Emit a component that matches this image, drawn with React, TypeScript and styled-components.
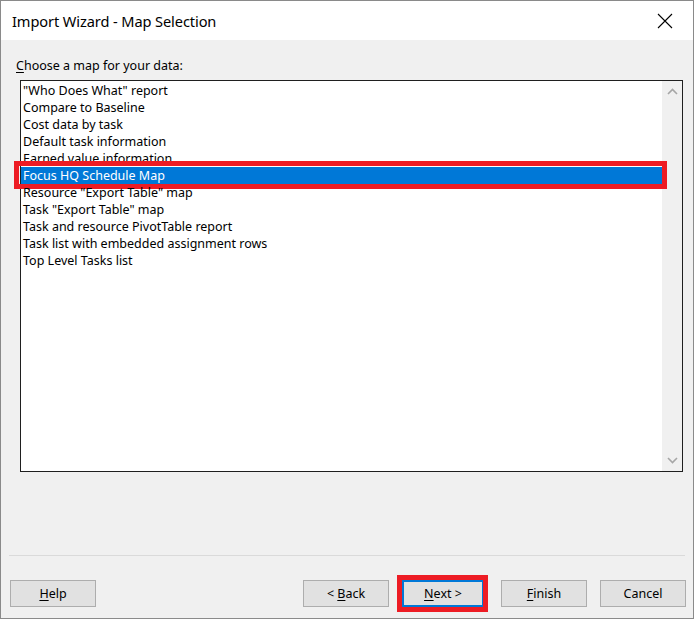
import { FC } from "react";
import styled, { createGlobalStyle } from "styled-components";

const maps = [
  '"Who Does What" report',
  "Compare to Baseline",
  "Cost data by task",
  "Default task information",
  "Earned value information",
  "Focus HQ Schedule Map",
  'Resource "Export Table" map',
  'Task "Export Table" map',
  "Task and resource PivotTable report",
  "Task list with embedded assignment rows",
  "Top Level Tasks list",
];

const selectedMap = "Focus HQ Schedule Map";

const App: FC = () => {
  return (
    <>
      <GlobalStyle />
      <StyledWindow>
        <StyledTitleBar>
          <StyledTitle>Import Wizard - Map Selection</StyledTitle>
          <StyledClose aria-label="Close">
            <svg width="16" height="16" viewBox="0 0 16 16">
              <path d="M1 1L15 15M15 1L1 15" stroke="#000" strokeWidth="1.1" />
            </svg>
          </StyledClose>
        </StyledTitleBar>

        <StyledContent>
          <StyledLabel>
            <u>C</u>hoose a map for your data:
          </StyledLabel>
          <StyledListBox>
            <StyledItems>
              {maps.map((name) => (
                <StyledItem key={name} $selected={name === selectedMap}>
                  {name}
                </StyledItem>
              ))}
            </StyledItems>
            <StyledScrollbar>
              <svg width="11" height="7" viewBox="0 0 11 7">
                <path d="M1 6L5.5 1.5L10 6" stroke="#a6a6a6" strokeWidth="1.6" fill="none" />
              </svg>
              <svg width="11" height="7" viewBox="0 0 11 7">
                <path d="M1 1L5.5 5.5L10 1" stroke="#a6a6a6" strokeWidth="1.6" fill="none" />
              </svg>
            </StyledScrollbar>
          </StyledListBox>
        </StyledContent>

        <StyledSeparator />

        <StyledFooter>
          <StyledButton>
            <span>
              <u>H</u>elp
            </span>
          </StyledButton>
          <StyledNavButtons>
            <StyledButton>
              <span>
                &lt; <u>B</u>ack
              </span>
            </StyledButton>
            <StyledButton $default>
              <span>
                <u>N</u>ext &gt;
              </span>
            </StyledButton>
            <StyledButton>
              <span>
                <u>F</u>inish
              </span>
            </StyledButton>
            <StyledButton>
              <span>Cancel</span>
            </StyledButton>
          </StyledNavButtons>
        </StyledFooter>
      </StyledWindow>
    </>
  );
};

const GlobalStyle = createGlobalStyle`
  html, body {
    margin: 0;
    padding: 0;
    background: #ffffff;
  }
  * {
    box-sizing: border-box;
  }
  u {
    text-underline-offset: 2px;
  }
`;

const StyledWindow = styled.div`
  width: 694px;
  height: 619px;
  display: flex;
  flex-direction: column;
  background-color: #f0f0f0;
  border: 1px solid #8a8a8a;
  font-family: "Noto Sans", "Open Sans", sans-serif;
  color: #000;
`;

const StyledTitleBar = styled.div`
  height: 39px;
  flex-shrink: 0;
  display: flex;
  align-items: center;
  justify-content: space-between;
  padding: 0 20px 0 11px;
  background-color: #ffffff;
`;

const StyledTitle = styled.div`
  font-size: 14.6px;
  letter-spacing: -0.1px;
`;

const StyledClose = styled.div`
  display: flex;
  width: 16px;
  height: 16px;
`;

const StyledContent = styled.div`
  display: flex;
  flex-direction: column;
  padding: 17px 10px 0 15px;
`;

const StyledLabel = styled.div`
  font-size: 12.5px;
  line-height: 17px;
`;

const StyledListBox = styled.div`
  margin: 6px 0 0 4px;
  width: 663px;
  height: 392px;
  display: grid;
  grid-template-columns: 1fr 20px;
  background-color: #ffffff;
  border: 1px solid #1f1f1f;
`;

const StyledItems = styled.div`
  display: flex;
  flex-direction: column;
  padding-top: 1px;
`;

const StyledItem = styled.div<{ $selected?: boolean }>`
  position: relative;
  height: 17px;
  line-height: 17px;
  padding-left: 2px;
  font-size: 12.5px;
  white-space: nowrap;
  color: ${(p) => (p.$selected ? "#ffffff" : "#000000")};
  background-color: ${(p) => (p.$selected ? "#0078d7" : "transparent")};

  ${(p) =>
    p.$selected &&
    `
    &::after {
      content: "";
      position: absolute;
      top: -6px;
      bottom: -5px;
      left: -7px;
      right: -5px;
      border: 5px solid #ed1c24;
    }
  `}
`;

const StyledScrollbar = styled.div`
  display: flex;
  flex-direction: column;
  justify-content: space-between;
  align-items: center;
  padding: 7px 0 7px 0;
  background-color: #f0f0f0;
`;

const StyledSeparator = styled.div`
  margin: 83px 8px 0 8px;
  height: 1px;
  background-color: #dadada;
`;

const StyledFooter = styled.div`
  display: flex;
  justify-content: space-between;
  padding: 24px 7px 0 9px;
`;

const StyledNavButtons = styled.div`
  display: flex;
  gap: 13px;
`;

const StyledButton = styled.div<{ $default?: boolean }>`
  position: relative;
  width: ${(p) => (p.$default ? "82px" : "86px")};
  margin: ${(p) => (p.$default ? "0 4px 0 0" : "0")};
  height: 27px;
  display: flex;
  align-items: center;
  justify-content: center;
  font-size: 12.5px;
  white-space: pre;
  background-color: #e1e1e1;
  border: ${(p) => (p.$default ? "2px solid #0078d7" : "1px solid #adadad")};

  ${(p) =>
    p.$default &&
    `
    &::after {
      content: "";
      position: absolute;
      top: -7px;
      bottom: -7px;
      left: -7px;
      right: -6px;
      border: 5px solid #ed1c24;
    }
  `}
`;

export default App;
